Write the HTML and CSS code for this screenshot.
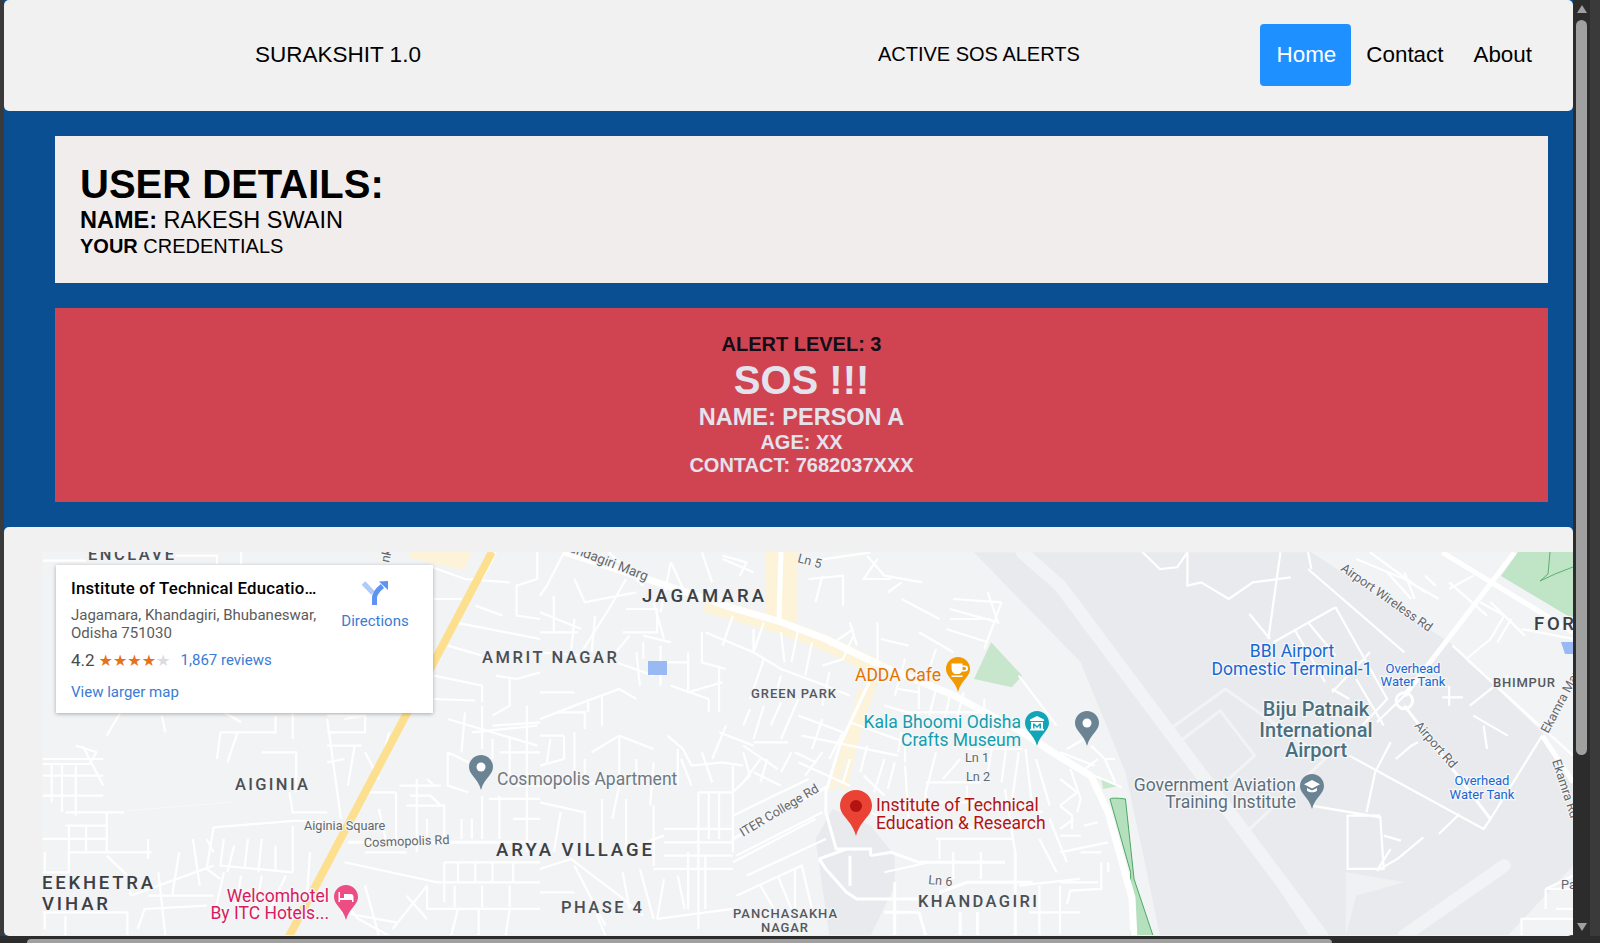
FILE: index.html
```html
<!DOCTYPE html>
<html lang="en">
<head>
    <meta charset="UTF-8">
    <meta name="viewport" content="width=device-width, initial-scale=1.0">
    <title>Surakshit 1.0</title>
    <link rel="stylesheet" href="styles.css">
</head>
<body>
<div class="window">
    <div class="window-row">
        <div class="page">
            <header class="header">
                <div class="brand">SURAKSHIT 1.0</div>
                <div class="alerts-link">ACTIVE SOS ALERTS</div>
                <nav class="nav">
                    <a class="nav-link active" href="#">Home</a>
                    <a class="nav-link" href="#">Contact</a>
                    <a class="nav-link" href="#">About</a>
                </nav>
            </header>

            <section class="user-card">
                <h1>USER DETAILS:</h1>
                <div class="user-name"><b>NAME:</b> RAKESH SWAIN</div>
                <div class="user-cred"><b>YOUR</b> CREDENTIALS</div>
            </section>

            <section class="sos-card">
                <div class="sos-level">ALERT LEVEL: 3</div>
                <div class="sos-title">SOS !!!</div>
                <div class="sos-name">NAME: PERSON A</div>
                <div class="sos-line">AGE: XX</div>
                <div class="sos-line">CONTACT: 7682037XXX</div>
            </section>

            <section class="map-section">
                <div class="map">
                    <svg class="map-canvas" width="1531" height="383" viewBox="42 553 1531 383">
                        <defs>
                            <path id="pin" d="M12 0C5.4 0 0 5.3 0 11.8c0 3.4 1.2 5.7 3.6 8.6C7 24.5 10.5 29 12 35c1.5-6 5-10.5 8.4-14.6 2.4-2.9 3.6-5.2 3.6-8.6C24 5.3 18.6 0 12 0z"/>
                        </defs>

                        <rect class="land" x="42" y="553" width="1531" height="383"/>

                        <!-- commercial areas -->
                        <g class="commercial">
                            <path d="M410 553h62l-8 18-54-12z"/>
                            <path class="commercial-band" d="M705 605L781 627 826 644 884 672"/>
                            <path class="commercial-band wide" d="M781 553V622"/>
                            <path class="commercial-band thin" d="M862 690L850 735 832 790"/>
                            <path class="commercial-band thin" d="M875 680L859 725 843 790"/>
                        </g>

                        <!-- airport -->
                        <g transform="translate(1060 520) scale(.3444 .3333)">
                            <path class="airport" d="M-250 100L60 430 190 760 240 1000 290 1250H1300L1490 1040V780L1400 640 1130 370 730 100z"/>
                            <path class="runway" d="M-110 100L0 200 760 1250"/>
                            <path class="runway" d="M1000 1250L1290 1040"/>
                            <path class="taxiway" d="M345 670L465 575 565 710 430 835z"/>
                            <path class="taxiway" d="M320 630L480 510 770 720 535 945 730 1250"/>
                            <path class="apron" d="M830 1060L1000 1090 860 1130 830 1250z"/>
                            <path class="park" d="M120 780L175 800 125 810z"/>
                            <path class="park-edge" d="M145 840Q150 835 190 840L215 1080 270 1250H205V1060z"/>
                        </g>

                        <!-- campus block -->
                        <g transform="translate(540 520) scale(.3444 .3333)">
                            <path class="airport" d="M800 960L850 870 960 920 1030 1010V1100L960 1250H840z"/>
                            <path class="park" d="M1310 370L1400 470 1370 505 1260 480z"/>
                        </g>

                        <!-- parks -->
                        <path class="park-edge-top" d="M1518 553L1501 577 1573 620V553z"/>
                        <path class="park-line" d="M1550 553L1548 575 1540 582 1555 575 1573 568"/>

                        <!-- west roads -->
                        <g class="roads" transform="translate(0 520) scale(.3444 .3333)">
                            <path d="M125 125H250M510 110H630V135M700 100V135M1255 145L1350 180 1480 190M1260 240H1340M1440 100L1400 180M1560 100V180L1500 200V290L1568 300M1320 310L1568 360M1380 260L1460 290M1300 380L1400 410M1260 470L1400 500V550M1440 470L1500 480 1568 460M1260 540L1380 545M1480 480V560L1430 590M1430 620L1568 610M1530 560V720"/>
                            <path d="M350 580L310 650M470 590L480 640M650 580L700 610M640 640L630 720M640 640H690L660 730M690 640H800V590M760 700H860V820M840 820L850 880H950M850 580V660M950 600L990 900M950 590H1060V640H950M950 680H1050M950 730L1000 720M1000 600L1060 590"/>
                            <path d="M125 735H260L280 700 220 680M125 770H300M220 740V890M190 880H360M190 920H310V1000M310 880V920M620 925L860 905 960 910M620 925L600 1050 640 1080M200 1000H440M430 960V1020M310 1010L370 1070 380 1130M125 1060H200V1000M380 1130L620 1040M650 960L640 1040 850 1060M125 1180H370"/>
                            <path d="M1300 700V800L1360 820M1300 700L1360 730M1160 800H1280M1190 830H1250L1280 860M1210 780V1000M1240 780L1260 800M1400 830V960M1340 900V960M1370 900V960M1450 830V960M1480 650V780M1430 660V720M1530 700V1000"/>
                            <path d="M1000 1030L1270 1090H1568M1290 1030V1150M1290 1030H1568M1330 1030V1090M1380 1030V1090M1430 1030V1090M1490 1030V1090M1140 1230L1240 1100M1240 1100V1170H1568M1320 1100V1165M1400 1100V1165M1480 1100V1165M990 1180L1150 1210M400 1230L420 1170 600 1160M370 1180V1250M1000 1150L1040 1200 1130 1250"/>
                            <path d="M125 830H300M125 720H300M240 680L300 800M150 735V850M180 735V880M125 960H310M200 920V1060M250 920V1000M130 1000V1060M130 1180V1230M190 1190V1250M430 1130H620M460 1060L480 1250M520 1000L500 1130M560 960L580 1100M600 960L620 1000M680 980L660 1060M720 960L710 1050M760 960L750 1060M800 980V1060M850 920V1060M900 1000L890 1150M830 1070L780 1180M650 1060L620 1200M700 1070L680 1200M760 1070L740 1190"/>
                            <path d="M1030 680L1010 800M1060 700L1100 780M1130 640L1100 760M1150 820V960M1180 860H1290V960M1060 820H1150M1060 1000H1180M1240 900V960M1100 870L1120 960M1350 580L1340 700M1400 560V690M1450 700H1568M1370 640L1560 620M1300 600L1560 680M1420 840H1568M1490 800H1568M1490 900H1568M1480 1170L1468 1250M1330 1170L1310 1250M1390 1170V1250M1180 1130L1240 1200M1060 1100L1100 1250"/>
                            <path class="road-mid" d="M1010 970H1568"/>
                            <path class="road-faint" d="M370 875L670 850"/>
                        </g>

                        <!-- centre roads -->
                        <g class="roads" transform="translate(540 520) scale(.3444 .3333)">
                            <path d="M70 100L20 200 0 230M100 180L130 250 280 220M200 100L300 200M380 130L420 220M380 130L350 280M250 180L200 270 120 400M250 270H340V340H240M330 250L360 360M380 370L300 350M470 100L500 190M530 110L600 130 580 170M530 120L620 160"/>
                            <path d="M760 130L960 100M780 180L880 170V260M820 170L800 250M950 110L1000 170 1110 190M980 120L940 180H1020M1010 220L1050 190M480 340L620 400V330M470 340V430L540 450M430 400V520L530 490M380 500L490 540M490 540V580M520 440V580M620 400L700 450 830 500 900 530M820 440L880 420 910 350M700 340L710 430M840 380L910 330M900 310L920 380M980 310V430M990 360L1070 380"/>
                            <path d="M610 570L590 620M650 560L620 660M700 550L670 620M750 540L700 660M620 670H720M750 590L880 640M820 600L790 690M880 640L840 720M760 650L1040 710M750 730L900 800M900 610L1060 670V730M950 680L930 760M1000 720L970 820M1030 730L1010 810"/>
                            <path d="M0 600L100 560 230 510 280 540M180 530V620M140 540V580M50 580H130V630M0 520H100M70 650V720M0 740L70 720M150 700L230 650 330 690M230 650V780M370 650L415 690 440 740 530 730 590 740M400 690V800M460 820H560V1000M460 820V1230M490 820V960M520 820V960M560 740V1000M590 680L690 750M590 700L610 770 560 820M640 720L590 790"/>
                            <path d="M560 890L780 780M570 1010L820 880M360 930H560M360 970H560M360 1010H560M330 1050H560M0 1050L90 1020 230 1130 300 1190M100 1040L190 1220M0 1120H100M340 1200L560 1170M430 1000V1170M480 1010V1170M560 1030L800 900M600 1070L830 960M570 1130L760 1040 790 1170M640 1100L680 1170M690 1070L730 1170M740 1050V1170"/>
                            <path d="M1040 700L1050 640M1100 500V570M1150 510L1130 590M1190 530L1175 600M1060 580H1290M1230 520L1210 600M1290 540V600M1150 700L1120 820V930M1120 790H1280M1120 850H1350M1170 780L1220 720M1240 800V850M1350 810L1380 1000M1240 690H1400M1410 690L1430 870 1460 880M1440 720L1480 860M1480 900L1530 1030M1150 960H1370M1160 960V1020M1200 240L1340 250M1190 270L1330 310 1300 220M1190 300H1310M1180 330L1300 370M1340 250L1290 390M1390 470L1500 620"/>
                            <path d="M0 280L120 330M0 340H110M40 230V340M100 300L90 400M160 290L150 400M0 400L130 410M260 350L220 400M300 370V420M430 430H350M350 380V500M280 400L290 500M220 430L330 470M0 650H70M30 660L20 730M100 640V760M0 800L230 790M130 720V800M280 720V800M330 730L320 860M230 800L210 900M0 850L130 880V1000M60 880L40 1000M180 840V1000M250 840V1000M330 860V1040M230 1000L360 950M410 720L440 800M470 700L500 790M520 640L620 680M540 620L500 720M290 1050L330 1200M240 1060L260 1170M150 1150L190 1250M360 1080L340 1200M400 1070L420 1170"/>
                            <path d="M620 760L700 800M660 720L640 790M700 760L730 700M740 700L800 730M770 770L820 700M900 720L880 790M940 770L1000 830M1060 740L1070 900M1000 850L1120 870M900 850L1000 900M480 240L560 260M560 290L530 380M650 310L620 400M750 330L730 430M790 370L770 470M840 460L820 560M700 470L680 540M650 420L610 540M1050 240L1160 300M1100 340L1200 400M1150 390L1120 480M1060 420L1030 530M1040 510L1100 520M1000 560L1100 590M1290 620H1390M1320 640L1300 760M1360 640L1340 790M1390 700L1370 850M1120 920L1340 930M1200 1000V1080M1280 1000V1080M1130 1030L1000 1060M1390 1100L1568 1080M1450 960L1500 1060M1420 1180H1568M1450 1100V1250M1510 1100V1250"/>
                            <path class="road-mid" d="M960 480L870 680 830 820V880L860 990H890M560 960L840 800M810 1020L890 990H960V1010M810 1020L830 1050 890 1120 920 1140H1100M900 1010V1100M960 1010L1020 1000 1100 1030H1350M1030 1090V1250M1000 1180H1100M1100 1180L1120 1250M1160 1120L1240 1090H1430M1220 1180V1250M1270 1180V1250M1380 1000V1250"/>
                        </g>

                        <!-- airport roads -->
                        <g class="roads" transform="translate(1060 520) scale(.3444 .3333)">
                            <path d="M240 100L290 150 340 145 370 100M370 100V200L410 190 490 240 560 190 670 175M640 100L605 360M550 285L610 360M730 150L720 100M620 370L800 265M680 330L770 490M720 310L800 410M900 400L790 520M860 480L940 620M790 510L840 540M860 120L1000 180 1100 240M900 100L1060 220M950 160L1020 240M1000 160L1030 240M1060 170L1090 200M1130 210L1200 170M1130 190L1240 290"/>
                            <path d="M720 150L1000 400M800 265L950 540 840 660M1140 380L1390 620M1180 420L1490 710M1220 250L1290 290 1250 360 1180 420M1250 250L1350 350M1310 300L1270 370M1340 330L1490 360M1000 530L920 610M840 710L1230 930 1250 900 1400 650M915 760L890 880M915 760L960 670M975 720L1020 680 1040 670M730 860L930 895 940 1050H835V890H930M940 950L990 965M1055 955L980 1020 920 1055 960 990M1100 945L1160 885M1190 560L1300 470M1200 590L1300 650M1230 620L1240 690M1130 500V560M1110 535H1170"/>
                            <path d="M1490 1070L1410 1110H1490M1440 1170H1490M1340 1250V1200H1490M1410 1110V1170M0 700L100 740M30 750L60 840 50 880M60 760L110 720M20 690L70 660M90 680L130 720H160M40 900L0 930M0 1000L140 970M0 1090H110M120 1030V1110L30 1115 20 1155M140 1030V1060M70 920L110 910M0 860L35 890V930M100 770L180 805M0 780L50 820 0 860M130 720L160 790M0 950H60M60 1000H120"/>
                            <path class="road-mid" d="M1000 560L1250 900"/>
                            <path class="road-wide" d="M1320 100L1000 530M1110 100L1490 340M1400 650L1490 790"/>
                            <circle class="road-mid" cx="1000" cy="545" r="24"/>
                        </g>

                        <!-- main roads -->
                        <path class="road-main" d="M564 553L647 580 733 609 781 623 826 640 884 668 953 696 1022 733 1060 758 1091 777 1108 813 1132 899 1134 940"/>
                        <path class="road-main slim" d="M781 553L779 620"/>
                        <path class="road-yellow" d="M492 553L285 945"/>

                        <!-- water -->
                        <path class="water" d="M648 662h19v14h-19z"/>
                        <path class="water" d="M1561 643h12v12h-8z"/>

                        <!-- area names -->
                        <g class="area-names">
                            <text x="88" y="561" textLength="86">ENCLAVE</text>
                            <text x="235" y="791" textLength="73">AIGINIA</text>
                            <text x="482" y="664" textLength="135">AMRIT NAGAR</text>
                            <text class="big" x="642" y="603" textLength="122">JAGAMARA</text>
                            <text class="small" x="751" y="699" textLength="85">GREEN PARK</text>
                            <text class="big" x="496" y="857" textLength="156">ARYA VILLAGE</text>
                            <text x="561" y="914" textLength="81">PHASE 4</text>
                            <text class="small" x="733" y="919" textLength="104">PANCHASAKHA</text>
                            <text class="small" x="761" y="933" textLength="47">NAGAR</text>
                            <text x="918" y="908" textLength="119">KHANDAGIRI</text>
                            <text class="big" x="42" y="890" textLength="111">EEKHETRA</text>
                            <text class="big" x="42" y="911" textLength="66">VIHAR</text>
                            <text class="big" x="1534" y="631" textLength="40">FOR</text>
                            <text class="small" x="1493" y="688" textLength="62">BHIMPUR</text>
                            <text class="small" x="1017" y="945" textLength="96">GANDAMUNDA</text>
                        </g>

                        <!-- road names -->
                        <g class="road-names">
                            <text transform="translate(743 838) rotate(-31)">ITER College Rd</text>
                            <text transform="translate(797 563) rotate(15)">Ln 5</text>
                            <text x="965" y="763">Ln 1</text>
                            <text x="966" y="782">Ln 2</text>
                            <text transform="translate(928 885) rotate(5)">Ln 6</text>
                            <text class="marg" text-anchor="end" transform="translate(646 582) rotate(21)">Khandagiri Marg</text>
                            <text transform="translate(389 564) rotate(-78)">nk</text>
                            <text x="304" y="831">Aiginia Square</text>
                            <text transform="translate(364 848) rotate(-2)">Cosmopolis Rd</text>
                            <text transform="translate(1340 571) rotate(35)">Airport Wireless Rd</text>
                            <text transform="translate(1414 727) rotate(49)">Airport Rd</text>
                            <text transform="translate(1548 735) rotate(-62)">Ekamra Marg</text>
                            <text transform="translate(1552 762) rotate(72)">Ekamra Rd</text>
                            <text x="1561" y="890">Pa</text>
                        </g>

                        <!-- places -->
                        <g class="poi poi-grey">
                            <text x="497" y="786">Cosmopolis Apartment</text>
                        </g>
                        <g class="poi poi-orange" text-anchor="end">
                            <text x="941" y="682">ADDA Cafe</text>
                        </g>
                        <g class="poi poi-teal" text-anchor="end">
                            <text x="1021" y="729">Kala Bhoomi Odisha</text>
                            <text x="1021" y="747">Crafts Museum</text>
                        </g>
                        <g class="poi poi-red">
                            <text x="876" y="812">Institute of Technical</text>
                            <text x="876" y="830">Education &amp; Research</text>
                        </g>
                        <g class="poi poi-pink" text-anchor="end">
                            <text x="329" y="903">Welcomhotel</text>
                            <text x="329" y="920">By ITC Hotels...</text>
                        </g>
                        <g class="poi poi-blue" text-anchor="middle">
                            <text x="1292" y="658">BBI Airport</text>
                            <text x="1292" y="676">Domestic Terminal-1</text>
                        </g>
                        <g class="poi poi-slate" text-anchor="end">
                            <text x="1296" y="792">Government Aviation</text>
                            <text x="1296" y="809">Training Institute</text>
                        </g>
                        <g class="poi poi-airport" text-anchor="middle">
                            <text x="1316" y="717">Biju Patnaik</text>
                            <text x="1316" y="738">International</text>
                            <text x="1316" y="758">Airport</text>
                        </g>
                        <g class="poi poi-tank" text-anchor="middle">
                            <text x="1413" y="674">Overhead</text>
                            <text x="1413" y="687">Water Tank</text>
                            <text x="1482" y="786">Overhead</text>
                            <text x="1482" y="800">Water Tank</text>
                        </g>

                        <!-- pins -->
                        <g transform="translate(469 756)">
                            <use href="#pin" class="pin-slate"/>
                            <circle class="pin-mark" cx="12" cy="12" r="4.5"/>
                        </g>
                        <g transform="translate(1075 712)">
                            <use href="#pin" class="pin-slate"/>
                            <circle class="pin-mark" cx="12" cy="12" r="4.5"/>
                        </g>
                        <g transform="translate(946 658)">
                            <use href="#pin" class="pin-orange"/>
                            <path class="pin-mark" d="M5.5 6.5h11v2h2.500a2 2 0 0 1 0 6h-3a5 5 0 0 1-3 2.500h-4c-2.500-.7-3.500-3.500-3.500-6zM16.500 10v3h2a1.500 1.500 0 0 0 0-3zM5.500 18.500h11v1.500h-11z"/>
                        </g>
                        <g transform="translate(1025 712)">
                            <use href="#pin" class="pin-teal"/>
                            <path class="pin-mark" d="M12 5l7 3.500v1.500h-14v-1.500zM6 11h12v7h1v1.500h-14v-1.500h1z"/>
                            <path class="pin-teal" d="M8 12.500h1.500l2.500 2.500 2.500-2.500h1.500v5h-1.500v-3l-2.500 2.500-2.500-2.500v3h-1.500z"/>
                        </g>
                        <g transform="translate(334 886)">
                            <use href="#pin" class="pin-pink"/>
                            <path class="pin-mark" d="M4.500 7h1.500v6h4v-4h6.500a3 3 0 0 1 3 3v5h-1.500v-2h-12v2h-1.500z"/>
                            <circle class="pin-pink" cx="8" cy="11" r="1.300"/>
                        </g>
                        <g transform="translate(1300 775)">
                            <use href="#pin" class="pin-slate"/>
                            <path class="pin-mark" d="M12 6l8 4.200-8 4.200-8-4.200zM7 14v2.800c1.500 1 3.200 1.500 5 1.500s3.500-.5 5-1.500v-2.800l-5 2.600z"/>
                        </g>
                        <g transform="translate(840 791)">
                            <path class="pin-red" d="M16 0C7 0 0 7 0 15.500c0 4.500 1.800 7.500 5 11.500C9.500 32.500 14 38 16 46c2-8 6.500-13.500 11-19 3.200-4 5-7 5-11.500C32 7 25 0 16 0z"/>
                            <circle class="pin-dot" cx="16" cy="16" r="6"/>
                        </g>
                    </svg>

                    <div class="place-card">
                        <div class="place-info">
                            <div class="place-title">Institute of Technical Education &amp; Research</div>
                            <div class="place-address">Jagamara, Khandagiri, Bhubaneswar, Odisha 751030</div>
                            <div class="place-rating">
                                <span class="rating-value">4.2</span>
                                <span class="stars">★★★★<span class="star-off">★</span></span>
                                <a class="place-link reviews" href="#">1,867 reviews</a>
                            </div>
                            <a class="place-link larger" href="#">View larger map</a>
                        </div>
                        <a class="directions" href="#">
                            <svg width="40" height="35" viewBox="0 0 40 35">
                                <path class="dir-light" d="M10.500 10L20 20"/>
                                <path class="dir-stem" d="M21.500 32V25c0-4 3-8 8-12"/>
                                <path class="dir-head" d="M26 8.500L35 8V17z"/>
                            </svg>
                            <span>Directions</span>
                        </a>
                    </div>
                </div>
            </section>
        </div>

        <div class="vbar">
            <div class="vbar-track">
                <span class="arrow-up"></span>
                <span class="vbar-thumb"></span>
                <span class="arrow-down"></span>
            </div>
            <div class="vbar-edge"></div>
        </div>
    </div>

    <div class="hbar">
        <span class="hbar-thumb"></span>
    </div>
</div>
</body>
</html>
```

FILE: styles.css
```css
* {
    box-sizing: border-box;
}
html, body {
    margin: 0;
    height: 100%;
    overflow: hidden;
}
body {
    font-family: "Liberation Sans", Arial, sans-serif;
    background-color: #3a3a3a;
    color: #000;
}
a {
    color: inherit;
    text-decoration: none;
}

.window {
    height: 943px;
    display: flex;
    flex-direction: column;
}
.window-row {
    height: 936px;
    display: flex;
}
.page {
    flex: 1;
    margin-left: 4px;
    height: 936px;
    overflow: hidden;
    background-color: #0a4f91;
}

/* header */
.header {
    height: 111px;
    display: flex;
    align-items: center;
    background-color: #f1f1f1;
    border-radius: 5px;
    padding-right: 26px;
}
.brand {
    margin-left: 251px;
    margin-top: -1px;
    font-size: 22.5px;
}
.alerts-link {
    margin-left: 457px;
    margin-top: -2px;
    font-size: 20px;
}
.nav {
    margin-left: auto;
    margin-top: -2px;
    display: flex;
}
.nav-link {
    display: block;
    padding: 18px 15px;
    font-size: 22.4px;
    line-height: 26px;
    border-radius: 4px;
}
.nav-link.active {
    padding-left: 17px;
    background-color: #1e90ff;
    color: #fff;
}

/* cards */
.user-card {
    margin: 25px 25px 0 51px;
    padding: 26px 25px 25px;
    background-color: #f2eded;
}
.user-card h1 {
    margin: 0;
    font-size: 40px;
}
.user-name {
    font-size: 23.5px;
}
.user-cred {
    font-size: 20px;
    margin-top: 1px;
}
.sos-card {
    margin: 25px 25px 0 51px;
    padding: 25px;
    background-color: #d04451;
    color: #e4e2ec;
    text-align: center;
    font-weight: bold;
}
.sos-level {
    margin-bottom: 2px;
    font-size: 20px;
    color: #120d18;
}
.sos-title {
    font-size: 40px;
}
.sos-name {
    font-size: 23.5px;
    line-height: 28px;
}
.sos-line {
    font-size: 20px;
}

/* map */
.map-section {
    margin-top: 25px;
    padding: 25px 0 0 38px;
    height: 409px;
    background-color: #f1f1f1;
    border-radius: 5px;
}
.map {
    position: relative;
    height: 383px;
}
.map-canvas {
    display: block;
}
.land {
    fill: #f2f3f5;
}
.commercial path {
    fill: #fcf3d9;
}
.commercial .commercial-band {
    fill: none;
    stroke: #fcf3d9;
    stroke-width: 16;
}
.commercial .commercial-band.wide {
    stroke-width: 32;
}
.commercial .commercial-band.thin {
    stroke-width: 7;
}
.airport {
    fill: #e9eaed;
}
.runway, .taxiway {
    fill: none;
    stroke: #f2f3f5;
    vector-effect: non-scaling-stroke;
}
.runway {
    stroke-width: 13;
    stroke-linecap: round;
}
.taxiway {
    stroke-width: 3;
}
.apron {
    fill: #f0f1f3;
}
.park {
    fill: #c8e6cc;
}
.park-edge {
    fill: #b5e0bd;
    stroke: #4da763;
    stroke-width: 1;
    vector-effect: non-scaling-stroke;
}
.park-edge-top {
    fill: #c0e4c6;
}
.park-line {
    fill: none;
    stroke: #5cb070;
}
.water {
    fill: #98b9f4;
}
.roads path, .roads circle {
    fill: none;
    stroke: #fff;
    stroke-width: 2.2;
    vector-effect: non-scaling-stroke;
}
.roads .road-mid {
    stroke-width: 3;
}
.roads .road-wide {
    stroke-width: 5;
}
.roads .road-faint {
    stroke: #f8f9fa;
    stroke-width: 1;
}
.road-main {
    fill: none;
    stroke: #fff;
    stroke-width: 7;
    stroke-linejoin: round;
}
.road-main.slim {
    stroke-width: 5;
}
.road-yellow {
    fill: none;
    stroke: #fde08f;
    stroke-width: 8;
}

/* map labels */
.map-canvas text {
    font-family: Roboto, "Liberation Sans", sans-serif;
}
.area-names text {
    font-size: 16.5px;
    font-weight: 500;
    fill: #4b4f54;
    stroke: #f2f3f5;
    stroke-width: 2.5px;
    paint-order: stroke;
}
.area-names .big {
    font-size: 18.5px;
    fill: #3c4043;
}
.area-names .small {
    font-size: 13px;
    fill: #55595e;
}
.road-names text {
    font-size: 12.7px;
    fill: #63676c;
    stroke: #f6f7f8;
    stroke-width: 2px;
    paint-order: stroke;
}
.road-names .marg {
    font-size: 13.5px;
}
.poi text {
    font-size: 17.5px;
    stroke: #f6f7f8;
    stroke-width: 2.5px;
    paint-order: stroke;
}
.poi-grey text {
    fill: #6f7a82;
}
.poi-orange text {
    fill: #e37400;
}
.poi-teal text {
    fill: #129eaf;
}
.poi-red text {
    fill: #b31412;
}
.poi-pink text {
    fill: #d81b60;
}
.poi-blue text {
    fill: #1967d2;
}
.poi-slate text {
    fill: #5e6f7c;
}
.poi-airport text {
    font-size: 20px;
    font-weight: 500;
    fill: #4a6f80;
}
.poi-tank text {
    font-size: 13px;
    fill: #1967d2;
}
.pin-slate {
    fill: #6b8494;
}
.pin-orange {
    fill: #f29900;
}
.pin-teal {
    fill: #12a5b8;
}
.pin-pink {
    fill: #ec4d82;
}
.pin-red {
    fill: #ea4335;
}
.pin-dot {
    fill: #b31412;
}
.pin-mark {
    fill: #fff;
}

/* place card over the map */
.place-card {
    position: absolute;
    left: 14px;
    top: 13px;
    width: 377px;
    height: 148px;
    display: flex;
    background-color: #fff;
    box-shadow: 0 1px 4px rgba(0, 0, 0, 0.3);
    font-family: Roboto, "Liberation Sans", sans-serif;
    font-size: 15px;
    padding: 14px 14px 0 15px;
}
.place-info {
    width: 252px;
}
.place-title {
    font-size: 16.8px;
    font-weight: 500;
    letter-spacing: 0.2px;
    line-height: 19px;
    white-space: nowrap;
    overflow: hidden;
    text-overflow: ellipsis;
}
.place-address {
    margin-top: 9px;
    color: #5b5b5b;
    line-height: 17.500px;
}
.place-rating {
    margin-top: 7px;
    height: 22px;
    display: flex;
    align-items: center;
    color: #4a4a4a;
}
.rating-value {
    font-size: 17px;
}
.stars {
    margin-left: 4px;
    font-family: "DejaVu Sans", sans-serif;
    font-size: 16px;
    color: #e7711b;
    width: 70px;
    white-space: nowrap;
}
.star-off {
    color: #dadce0;
}
.place-link {
    color: #3a7bd5;
}
.reviews {
    margin-left: 12px;
}
.larger {
    display: block;
    margin-top: 12px;
}
.directions {
    margin-left: 8px;
    width: 88px;
    display: flex;
    flex-direction: column;
    align-items: center;
    color: #3a7bd5;
}
.directions svg {
    display: block;
    margin: -6px 0 0 -4px;
}
.directions span {
    margin-top: 4px;
    white-space: nowrap;
}
.dir-light, .dir-stem {
    fill: none;
    stroke-width: 5;
}
.dir-light {
    stroke: #aecbfa;
}
.dir-stem {
    stroke: #5e92f3;
}
.dir-head {
    fill: #5e92f3;
}

/* window scrollbars */
.vbar {
    width: 27px;
    display: flex;
    background-color: #2c2c2c;
}
.vbar-track {
    width: 17px;
    padding: 5px 3px 0 3px;
    display: flex;
    flex-direction: column;
    align-items: center;
}
.vbar-edge {
    width: 10px;
    background-color: #3a3a3a;
}
.arrow-up, .arrow-down {
    width: 0;
    height: 0;
    border-left: 5px solid transparent;
    border-right: 5px solid transparent;
}
.arrow-up {
    border-bottom: 8px solid #a0a0a0;
}
.arrow-down {
    margin-top: 168px;
    border-top: 8px solid #a0a0a0;
}
.vbar-thumb {
    margin-top: 7px;
    width: 11px;
    height: 735px;
    border-radius: 6px;
    background-color: #a0a0a0;
}
.hbar {
    height: 7px;
    padding: 3px 0 0 27px;
    background-color: #2c2c2c;
}
.hbar-thumb {
    display: block;
    width: 1305px;
    height: 4px;
    border-radius: 4px 4px 0 0;
    background-color: #a0a0a0;
}
```
